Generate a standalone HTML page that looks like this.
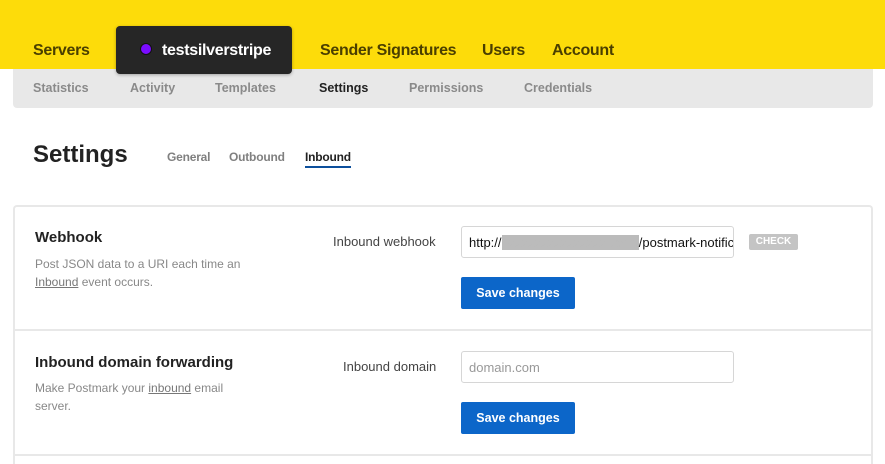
<!DOCTYPE html>
<html><head><style>
*{margin:0;padding:0;box-sizing:border-box}
html,body{width:885px;height:464px;overflow:hidden}
body{background:#fff;font-family:"Liberation Sans",Arial,sans-serif;position:relative}
.a{position:absolute;white-space:nowrap}
.top{position:absolute;left:0;top:0;width:885px;height:69px;background:#fddc0a}
.nav{font-size:16px;font-weight:bold;color:#4a3f00;top:42px;letter-spacing:-0.3px}
.tab{position:absolute;left:116px;top:26px;width:176px;height:48px;background:#262626;border-radius:4px;box-shadow:0 1px 3px rgba(0,0,0,.3)}
.sub{position:absolute;left:13px;top:69px;width:860px;height:39px;background:#e8e8e8;border-radius:0 0 4px 4px}
.s{font-size:12.5px;font-weight:bold;color:#8a8a8a;top:81px}
.t{font-size:12px;font-weight:bold;color:#808080;top:150px;letter-spacing:-0.2px}
.card{position:absolute;left:13px;top:205px;width:860px;height:259px;border:2px solid #e8e8e8;border-bottom:none;border-radius:4px 4px 0 0}
.hr{position:absolute;left:13px;width:860px;height:2px;background:#e8e8e8}
.h{font-size:15px;font-weight:bold;color:#222}
.d{font-size:12px;color:#888;line-height:18px}
.d u{color:#777}
.l{font-size:13px;color:#444}
.in{position:absolute;left:461px;width:273px;height:32px;border:1px solid #d6d6d6;border-radius:3px;font-size:13px;padding:8px 7px;color:#111;overflow:hidden;white-space:nowrap}
.btn{position:absolute;left:461px;width:114px;height:32px;background:#0c66c9;border-radius:2px;color:#fff;font-size:12.5px;font-weight:bold;text-align:center;line-height:32px}
</style></head><body>
<div class="top"></div>
<div class="sub"></div>
<div class="a nav" style="left:33px">Servers</div>
<div class="tab"></div>
<div class="a" style="left:140px;top:43px;width:12px;height:12px;border-radius:50%;background:#7a0cff;border:1px solid #111"></div>
<div class="a nav" style="left:162px;color:#fff">testsilverstripe</div>
<div class="a nav" style="left:320px">Sender Signatures</div>
<div class="a nav" style="left:482px">Users</div>
<div class="a nav" style="left:552px">Account</div>
<div class="a s" style="left:33px">Statistics</div>
<div class="a s" style="left:130px">Activity</div>
<div class="a s" style="left:215px">Templates</div>
<div class="a s" style="left:319px;color:#222">Settings</div>
<div class="a s" style="left:409px">Permissions</div>
<div class="a s" style="left:524px">Credentials</div>
<div class="a" style="left:33px;top:141px;font-size:24px;font-weight:bold;color:#222">Settings</div>
<div class="a t" style="left:167px">General</div>
<div class="a t" style="left:229px">Outbound</div>
<div class="a t" style="left:305px;color:#222">Inbound</div>
<div class="a" style="left:305px;top:166px;width:46px;height:2px;background:#0c4f9c"></div>
<div class="card"></div>
<div class="hr" style="top:329px"></div>
<div class="hr" style="top:454px"></div>
<div class="a h" style="left:35px;top:229px">Webhook</div>
<div class="a d" style="left:35px;top:255px">Post JSON data to a URI each time an<br><u>Inbound</u> event occurs.</div>
<div class="a l" style="left:333px;top:234px">Inbound webhook</div>
<div class="in" style="top:226px">http://<span style="background:#bbb;color:#bbb">i-xxxxxxxxxxxxxxx-.com</span>/postmark-notifications</div>
<div class="a" style="left:749px;top:234px;width:49px;height:16px;background:#c4c4c4;border-radius:2px;color:#fff;font-size:10px;font-weight:bold;text-align:center;line-height:16px">CHECK</div>
<div class="btn" style="top:277px">Save changes</div>
<div class="a h" style="left:35px;top:354px">Inbound domain forwarding</div>
<div class="a d" style="left:35px;top:379px">Make Postmark your <u>inbound</u> email<br>server.</div>
<div class="a l" style="left:343px;top:359px">Inbound domain</div>
<div class="in" style="top:351px;color:#999">domain.com</div>
<div class="btn" style="top:402px">Save changes</div>
</body></html>
